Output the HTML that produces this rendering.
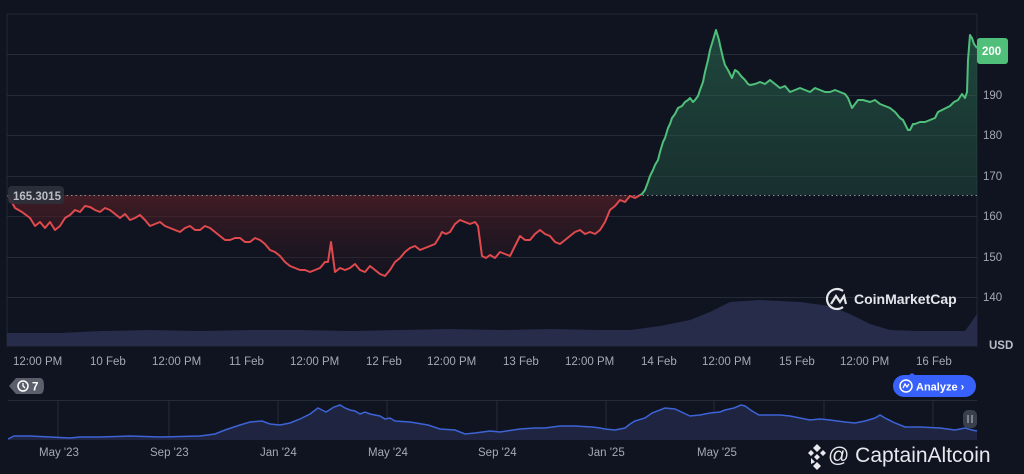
<!DOCTYPE html>
<html><head><meta charset="utf-8"><style>
html,body{margin:0;padding:0;background:#0f1420;width:1024px;height:474px;overflow:hidden;font-family:"Liberation Sans",sans-serif}
svg{position:absolute;left:0;top:0}
</style></head><body>
<svg width="1024" height="474" viewBox="0 0 1024 474">
<defs>
<linearGradient id="gg" x1="0" y1="0" x2="0" y2="1"><stop offset="0" stop-color="#2f7a5a" stop-opacity="0.5"/><stop offset="1" stop-color="#1d3a32" stop-opacity="0.45"/></linearGradient>
<linearGradient id="rg" x1="0" y1="0" x2="0" y2="1"><stop offset="0" stop-color="#5a2026" stop-opacity="0.7"/><stop offset="1" stop-color="#2a1520" stop-opacity="0.2"/></linearGradient>
<clipPath id="top"><rect x="0" y="0" width="1024" height="195"/></clipPath>
<clipPath id="bot"><rect x="0" y="195" width="1024" height="300"/></clipPath>
<path id="p" fill="none" d="M8,195 L15,208 22,212 30,218 35,226 40,222 45,228 50,222 55,230 60,226 65,218 70,215 75,210 80,212 85,206 90,207 95,210 100,212 105,208 110,210 115,214 120,218 125,214 130,220 135,218 140,215 145,220 150,226 155,224 160,222 165,226 170,228 175,230 180,232 185,228 190,226 195,230 200,230 205,226 210,228 215,232 220,236 225,240 230,240 235,238 240,238 245,242 250,242 255,238 260,240 265,244 270,250 275,252 280,256 285,262 290,266 295,268 300,270 305,270 310,272 315,270 320,268 325,262 328,262 331,242 335,272 340,268 345,270 350,268 355,264 360,270 365,272 370,266 375,270 380,274 385,276 390,270 395,262 400,258 405,252 410,248 415,246 420,250 425,248 430,246 435,244 440,236 442,232 446,234 450,232 455,224 460,220 465,222 470,224 475,222 478,226 482,256 486,258 490,255 495,258 500,252 505,254 510,256 515,246 520,236 525,240 530,240 535,234 540,230 545,234 550,236 555,242 560,244 565,240 570,236 575,232 580,230 585,234 590,232 595,234 600,230 605,222 610,210 615,206 620,200 625,202 630,196 635,198 642,194 645,190 648,182 650,176 653,170 655,165 658,160 660,152 663,142 665,138 668,128 670,124 672,118 675,114 678,108 682,106 685,102 688,100 690,98 693,102 695,100 698,96 700,90 703,82 705,72 708,60 710,50 713,40 716,30 719,40 720,45 723,58 725,65 728,70 730,74 732,78 735,70 738,72 741,76 745,80 748,84 750,85 755,84 760,82 765,84 770,80 775,84 780,88 785,86 790,92 795,90 800,88 805,90 810,92 815,88 820,90 825,92 830,92 835,90 840,92 845,94 848,98 852,108 855,104 858,100 863,100 870,102 875,100 880,104 885,106 890,108 895,112 900,118 903,120 905,124 908,130 910,130 913,124 915,124 920,122 925,122 930,120 935,118 938,112 942,110 946,108 950,106 954,102 958,100 962,94 965,98 967,92 968,60 970,35 972,38 974,44 977,48"/>
<path id="m" fill="none" d="M8,439 L14,436 30,436 50,437 70,438 80,437 100,437 130,436 160,437 200,436 215,434 225,430 240,425 250,422 262,421 270,424 280,425 290,423 300,419 310,414 318,408 322,410 326,412 334,407 340,405 345,408 350,410 355,411 360,414 365,412 370,414 380,416 385,419 390,418 395,421 410,422 428,425 440,429 455,430 465,434 475,433 490,431 500,432 520,429 535,428 545,428 560,426 575,426 592,427 600,428 605,429 615,430 625,428 630,424 635,421 645,418 652,413 665,408 675,409 690,416 700,415 710,413 720,412 725,410 734,408 741,405 745,406 752,411 759,415 768,415 780,415 790,416 800,418 810,420 820,419 830,420 845,422 855,423 865,421 875,418 880,415 885,418 895,423 905,427 920,427 940,428 955,430 965,428 972,430 977,431"/>
</defs>
<rect x="7" y="14" width="970" height="332" fill="none" stroke="#232836" stroke-width="1"/>
<g stroke="#262b38" stroke-width="1">
<line x1="7" y1="54.5" x2="977" y2="54.5"/><line x1="7" y1="95.5" x2="977" y2="95.5"/><line x1="7" y1="135.5" x2="977" y2="135.5"/><line x1="7" y1="176.5" x2="977" y2="176.5"/><line x1="7" y1="216.5" x2="977" y2="216.5"/><line x1="7" y1="257.5" x2="977" y2="257.5"/><line x1="7" y1="297.5" x2="977" y2="297.5"/>
</g>
<g clip-path="url(#top)"><path d="M8,195 L15,208 22,212 30,218 35,226 40,222 45,228 50,222 55,230 60,226 65,218 70,215 75,210 80,212 85,206 90,207 95,210 100,212 105,208 110,210 115,214 120,218 125,214 130,220 135,218 140,215 145,220 150,226 155,224 160,222 165,226 170,228 175,230 180,232 185,228 190,226 195,230 200,230 205,226 210,228 215,232 220,236 225,240 230,240 235,238 240,238 245,242 250,242 255,238 260,240 265,244 270,250 275,252 280,256 285,262 290,266 295,268 300,270 305,270 310,272 315,270 320,268 325,262 328,262 331,242 335,272 340,268 345,270 350,268 355,264 360,270 365,272 370,266 375,270 380,274 385,276 390,270 395,262 400,258 405,252 410,248 415,246 420,250 425,248 430,246 435,244 440,236 442,232 446,234 450,232 455,224 460,220 465,222 470,224 475,222 478,226 482,256 486,258 490,255 495,258 500,252 505,254 510,256 515,246 520,236 525,240 530,240 535,234 540,230 545,234 550,236 555,242 560,244 565,240 570,236 575,232 580,230 585,234 590,232 595,234 600,230 605,222 610,210 615,206 620,200 625,202 630,196 635,198 642,194 645,190 648,182 650,176 653,170 655,165 658,160 660,152 663,142 665,138 668,128 670,124 672,118 675,114 678,108 682,106 685,102 688,100 690,98 693,102 695,100 698,96 700,90 703,82 705,72 708,60 710,50 713,40 716,30 719,40 720,45 723,58 725,65 728,70 730,74 732,78 735,70 738,72 741,76 745,80 748,84 750,85 755,84 760,82 765,84 770,80 775,84 780,88 785,86 790,92 795,90 800,88 805,90 810,92 815,88 820,90 825,92 830,92 835,90 840,92 845,94 848,98 852,108 855,104 858,100 863,100 870,102 875,100 880,104 885,106 890,108 895,112 900,118 903,120 905,124 908,130 910,130 913,124 915,124 920,122 925,122 930,120 935,118 938,112 942,110 946,108 950,106 954,102 958,100 962,94 965,98 967,92 968,60 970,35 972,38 974,44 977,48 L977,195 L8,195Z" fill="url(#gg)"/></g>
<g clip-path="url(#bot)"><path d="M8,195 L15,208 22,212 30,218 35,226 40,222 45,228 50,222 55,230 60,226 65,218 70,215 75,210 80,212 85,206 90,207 95,210 100,212 105,208 110,210 115,214 120,218 125,214 130,220 135,218 140,215 145,220 150,226 155,224 160,222 165,226 170,228 175,230 180,232 185,228 190,226 195,230 200,230 205,226 210,228 215,232 220,236 225,240 230,240 235,238 240,238 245,242 250,242 255,238 260,240 265,244 270,250 275,252 280,256 285,262 290,266 295,268 300,270 305,270 310,272 315,270 320,268 325,262 328,262 331,242 335,272 340,268 345,270 350,268 355,264 360,270 365,272 370,266 375,270 380,274 385,276 390,270 395,262 400,258 405,252 410,248 415,246 420,250 425,248 430,246 435,244 440,236 442,232 446,234 450,232 455,224 460,220 465,222 470,224 475,222 478,226 482,256 486,258 490,255 495,258 500,252 505,254 510,256 515,246 520,236 525,240 530,240 535,234 540,230 545,234 550,236 555,242 560,244 565,240 570,236 575,232 580,230 585,234 590,232 595,234 600,230 605,222 610,210 615,206 620,200 625,202 630,196 635,198 642,194 L642,195 L8,195Z" fill="url(#rg)"/></g>
<path d="M7,333 L60,333 100,331 150,330 200,331 250,330 300,330 350,331 400,330 450,329 500,330 550,329 600,330 630,330 660,326 690,320 710,312 730,302 760,300 800,302 830,306 850,314 870,324 890,330 920,331 965,331 970,324 977,314 L977,346 L7,346Z" fill="#262c4a"/>
<line x1="8" y1="195.5" x2="977" y2="195.5" stroke="#8a8f9c" stroke-width="1" stroke-dasharray="1.5,3"/>
<g clip-path="url(#top)"><use href="#p" stroke="#4fbf7a" stroke-width="2" stroke-linejoin="round"/></g>
<g clip-path="url(#bot)"><use href="#p" stroke="#e0494d" stroke-width="2" stroke-linejoin="round"/></g>
<rect x="8" y="186" width="56" height="18" rx="4" fill="#2c313c" opacity="0.9"/>
<text x="13" y="200" fill="#b9bdc6" font-size="11.5" font-weight="bold">165.3015</text>
<rect x="977" y="38" width="31" height="26" rx="3" fill="#4fbf7a"/>
<text x="982" y="55" fill="#fff" font-size="11.5" font-weight="bold">200</text>
<g fill="#a5a9b2" font-size="11.5">
<text x="983" y="99">190</text><text x="983" y="139">180</text><text x="983" y="180">170</text><text x="983" y="220">160</text><text x="983" y="261">150</text><text x="983" y="301">140</text>
</g>
<text x="989" y="349" fill="#b9bdc6" font-size="11.5" font-weight="bold">USD</text>
<g fill="none" stroke="#e4e6ea" stroke-width="2.2"><path d="M843,307 A10,10 0 1 1 843,291"/><path d="M831,304 L836,296 L840,302 L844,296 L846,304"/></g>
<text x="854" y="304" fill="#e4e6ea" font-size="14" font-weight="bold">CoinMarketCap</text>
<g fill="#a5a9b2" font-size="11.5">
<text x="13" y="365">12:00 PM</text><text x="90" y="365">10 Feb</text><text x="152" y="365">12:00 PM</text><text x="229" y="365">11 Feb</text><text x="290" y="365">12:00 PM</text><text x="366" y="365">12 Feb</text><text x="427" y="365">12:00 PM</text><text x="503" y="365">13 Feb</text><text x="565" y="365">12:00 PM</text><text x="641" y="365">14 Feb</text><text x="702" y="365">12:00 PM</text><text x="779" y="365">15 Feb</text><text x="840" y="365">12:00 PM</text><text x="916" y="365">16 Feb</text>
</g>
<path d="M16,378 L40,378 Q44,378 44,386 Q44,394 40,394 L16,394 L9,386Z" fill="#5a5f6b"/>
<circle cx="23" cy="386" r="5" fill="none" stroke="#fff" stroke-width="1.5"/><path d="M23,383 L23,386 L25,388" stroke="#fff" stroke-width="1.3" fill="none"/>
<text x="32" y="390.5" fill="#fff" font-size="11.5" font-weight="bold">7</text>
<rect x="893" y="375" width="83" height="22" rx="11" fill="#3861fb"/>
<path d="M912,373 L915,375 L909,375Z" fill="#3861fb"/>
<circle cx="906" cy="386" r="6" fill="none" stroke="#fff" stroke-width="1.5"/><path d="M903,388 L905,384 L907,387 L909,384" stroke="#fff" stroke-width="1.3" fill="none"/>
<text x="916" y="390.5" fill="#fff" font-size="11" font-weight="bold">Analyze ›</text>
<line x1="8" y1="400.5" x2="977" y2="400.5" stroke="#262b38"/>
<g stroke="#262b38"><line x1="58" y1="401" x2="58" y2="440"/><line x1="169" y1="401" x2="169" y2="440"/><line x1="278" y1="401" x2="278" y2="440"/><line x1="387" y1="401" x2="387" y2="440"/><line x1="497" y1="401" x2="497" y2="440"/><line x1="606" y1="401" x2="606" y2="440"/><line x1="714" y1="401" x2="714" y2="440"/><line x1="824" y1="401" x2="824" y2="440"/><line x1="933" y1="401" x2="933" y2="440"/></g>
<path d="M8,439 L14,436 30,436 50,437 70,438 80,437 100,437 130,436 160,437 200,436 215,434 225,430 240,425 250,422 262,421 270,424 280,425 290,423 300,419 310,414 318,408 322,410 326,412 334,407 340,405 345,408 350,410 355,411 360,414 365,412 370,414 380,416 385,419 390,418 395,421 410,422 428,425 440,429 455,430 465,434 475,433 490,431 500,432 520,429 535,428 545,428 560,426 575,426 592,427 600,428 605,429 615,430 625,428 630,424 635,421 645,418 652,413 665,408 675,409 690,416 700,415 710,413 720,412 725,410 734,408 741,405 745,406 752,411 759,415 768,415 780,415 790,416 800,418 810,420 820,419 830,420 845,422 855,423 865,421 875,418 880,415 885,418 895,423 905,427 920,427 940,428 955,430 965,428 972,430 977,431 L977,440 L8,440Z" fill="#1f2540"/>
<use href="#m" stroke="#3d63d6" stroke-width="1.5"/>
<rect x="963" y="410" width="14" height="18" rx="5" fill="#3a3f4c"/>
<path d="M968,415 V423 M972,415 V423" stroke="#c0c4cc" stroke-width="1"/>
<g fill="#a5a9b2" font-size="11.5">
<text x="39" y="456">May '23</text><text x="150" y="456">Sep '23</text><text x="260" y="456">Jan '24</text><text x="368" y="456">May '24</text><text x="478" y="456">Sep '24</text><text x="588" y="456">Jan '25</text><text x="697" y="456">May '25</text>
</g>
<g fill="#e8e8ee" transform="translate(808,444)">
<path d="M9,0 L13,4 9,8 5,4Z M3,6 L6,9 3,12 0,9Z M15,6 L18,9 15,12 12,9Z M9,10 L12,13 9,16 6,13Z M9,18 L13,22 9,26 5,22Z M3,14 L7,18 3,20Z"/>
</g>
<text x="828" y="462" fill="#e8e8ee" font-size="21">@ CaptainAltcoin</text>
</svg>
</body></html>
